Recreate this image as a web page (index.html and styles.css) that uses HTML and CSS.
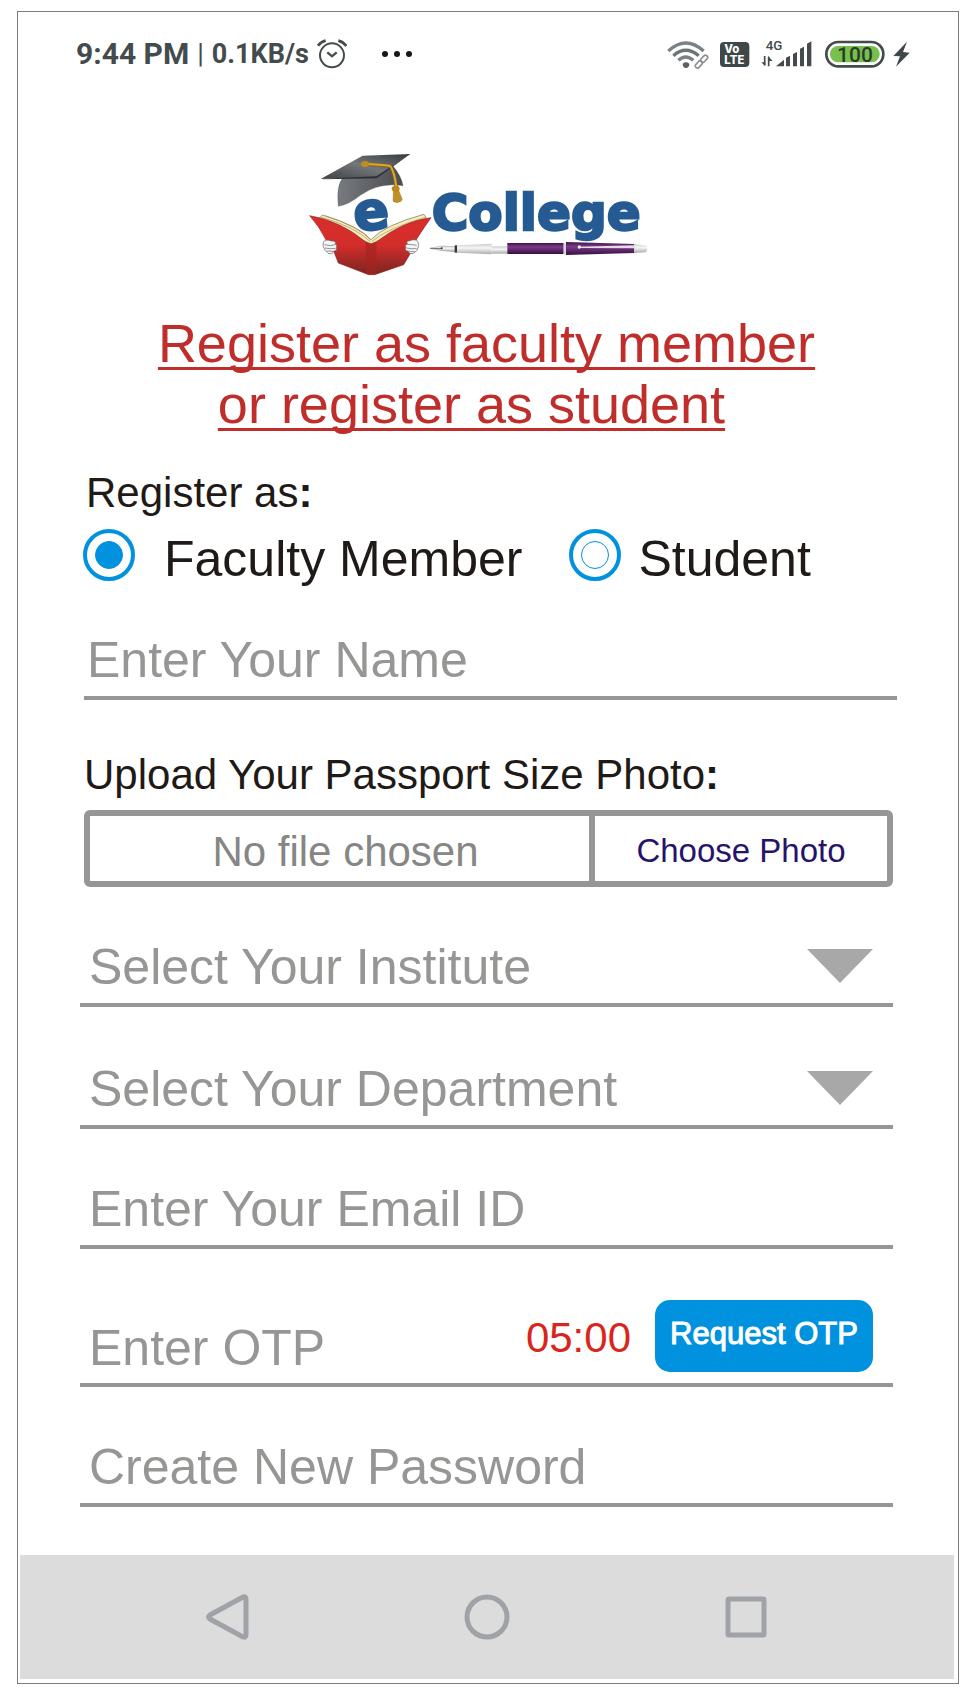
FILE: index.html
```html
<!DOCTYPE html>
<html lang="en">
<head>
<meta charset="utf-8">
<meta name="viewport" content="width=device-width, initial-scale=1">
<title>eCollege – Register</title>
<link rel="stylesheet" href="styles.css">
</head>
<body>
<div class="phone">
  <header class="status">
    <span class="status-time">9:44 PM</span>
    <span class="status-divider">|</span>
    <span class="status-speed">0.1KB/s</span>
    <svg class="status-alarm" width="30" height="30" viewBox="0 0 90 90" fill="none" stroke="#434b4d" stroke-width="6" aria-hidden="true">
      <circle cx="45" cy="49" r="36"/>
      <path d="M31 40 L45 52 L59 40" stroke-width="7"/>
      <path d="M3 20 Q12 8 26 5 M64 5 Q78 8 88 21" stroke-width="8"/>
    </svg>
    <svg class="status-dots" width="30" height="6" viewBox="0 0 30 6" fill="#15181a" aria-hidden="true">
      <circle cx="3" cy="3" r="3"/><circle cx="15" cy="3" r="3"/><circle cx="27" cy="3" r="3"/>
    </svg>
    <svg class="status-icons" width="244" height="30" viewBox="81 114 732 90" aria-hidden="true">
      <g fill="none" stroke="#7b8285" stroke-width="10">
        <path d="M85 150 Q137 102 191 150"/>
        <path d="M100 164 Q137 132 176 164" stroke="#6c7477"/>
        <path d="M115 178 Q137 158 160 178"/>
      </g>
      <path d="M128 188 Q138 180 148 188 Q148 200 138 201 Q128 200 128 188Z" fill="#596164"/>
      <g fill="none" stroke="#8b9193" stroke-width="5">
        <rect x="-12" y="-6" width="24" height="13" rx="6" transform="translate(176 190) rotate(-48)"/>
        <rect x="-12" y="-6" width="24" height="13" rx="6" transform="translate(192 173) rotate(-48)"/>
      </g>
      <rect x="240" y="123" width="88" height="75" rx="12" fill="#3e4749"/>
      <text x="253" y="155" class="badge-text">Vo</text>
      <text x="253" y="190" class="badge-text">LTE</text>
      <text x="377" y="147" class="net-text">4G</text>
      <path d="M374 165 V193 M386 196 V167" fill="none" stroke="#434b4d" stroke-width="5"/>
      <path d="M364 184 H376 V196Z M384 165 L398 180 H384Z" fill="#434b4d"/>
      <path d="M408 196 L432 176 V196Z M438 170 L450 164 V196 H438Z M459 159 L471 153 V196 H459Z M480 143 L492 137 V196 H480Z M501 128 L514 121 V196 H501Z" fill="#434b4d"/>
      <rect x="559" y="123" width="171" height="73" rx="36" fill="#fff" stroke="#434b4d" stroke-width="8"/>
      <rect x="570" y="135" width="149" height="49" rx="24" fill="#78bf4b"/>
      <text x="645" y="183" class="battery-text" text-anchor="middle">100</text>
      <path d="M801 122 L760 165 L780 166 L768 197 L809 155 L789 153Z" fill="#3e4749"/>
    </svg>
  </header>

  <main class="content">
    <svg class="logo" width="356" height="124" viewBox="27 36 1068 372" role="img" aria-label="eCollege">
      <defs>
        <linearGradient id="board" x1="0" y1="1" x2="1" y2="0"><stop offset="0" stop-color="#3f4245"/><stop offset=".5" stop-color="#74777a"/><stop offset="1" stop-color="#36393c"/></linearGradient>
        <linearGradient id="cap" x1="0" y1="0" x2="1" y2="0"><stop offset="0" stop-color="#777b80"/><stop offset="1" stop-color="#484b50"/></linearGradient>
        <linearGradient id="cover" x1="0" y1="0" x2="0" y2="1"><stop offset="0" stop-color="#d92e2b"/><stop offset=".5" stop-color="#d32d2a"/><stop offset="1" stop-color="#792522"/></linearGradient>
        <linearGradient id="barrel" x1="0" y1="0" x2="0" y2="1"><stop offset="0" stop-color="#3c1247"/><stop offset=".35" stop-color="#7d3b88"/><stop offset="1" stop-color="#35103f"/></linearGradient>
        <linearGradient id="silver" x1="0" y1="0" x2="0" y2="1"><stop offset="0" stop-color="#c9cbcd"/><stop offset=".4" stop-color="#f6f6f6"/><stop offset="1" stop-color="#a8aaad"/></linearGradient>
      </defs>
      <path d="M130 112 Q108 135 115 199 Q146 194 182 165 Q238 126 309 137 Q304 108 279 78 L228 111Z" fill="url(#cap)" stroke="#4b4e50" stroke-width="1"/>
      <path d="M63 116 L188 47 L331 42 L229 111Z" fill="url(#board)"/>
      <path d="M63 116 L229 109 L331 42 L230 115 L70 118Z" fill="#2c2f31"/>
      <path d="M200 73 Q260 77 268 78 Q280 83 289 140" fill="none" stroke="#8c6513" stroke-width="10"/>
      <path d="M200 72 Q260 76 268 77 Q280 82 289 140" fill="none" stroke="#dca52e" stroke-width="6"/>
      <ellipse cx="195" cy="72" rx="12" ry="9" fill="#c18e1e"/>
      <path d="M280 152 L279 184 Q290 192 303 184 L307 178 L296 151Z" fill="#bf9127" stroke="#8b661c" stroke-width="1"/>
      <ellipse cx="287" cy="146" rx="12" ry="9" fill="#ba881d"/>
      <path d="M55 238 L67 225 Q180 259 213 299 Q253 255 372 223 L380 236 L213 312Z" fill="#f5eebc" stroke="#7c6840" stroke-width="2"/>
      <path d="M64 232 Q165 260 211 305 M76 227 Q178 261 212 300 M215 305 Q257 267 376 232" fill="none" stroke="#aa8960" stroke-width="2"/>
      <path d="M29 227 Q123 243 197 306 L213 312 L229 306 Q310 243 393 233 Q353 290 345 306 L330 342 L311 374 L224 404 H206 L115 369 L103 338 L77 298 Q57 258 29 227Z" fill="url(#cover)" stroke="#972421" stroke-width="2"/>
      <path d="M197 306 L213 312 L229 306 V402 H198Z" fill="#a62320" fill-opacity=".65"/>
      <g fill="#f5f5f5" stroke="#5e6164" stroke-width="2">
        <path d="M70 307 Q73 296 95 303 Q109 302 106 312 Q113 316 109 324 Q113 332 101 334 Q97 344 84 340 Q74 333 69 318Z"/>
        <path d="M73 314 Q92 320 106 314 M75 324 Q93 328 107 325 M80 333 L100 334" fill="none"/>
        <path d="M354 305 Q347 295 329 302 Q317 303 322 312 Q313 317 317 324 Q312 331 324 334 Q329 344 342 339 Q354 333 356 317Z"/>
        <path d="M350 316 Q333 313 321 313 M350 326 Q332 327 319 324 M344 335 L323 333" fill="none"/>
      </g>
      <text x="160" y="268" class="logo-e" transform="rotate(-5 216 224)">e</text>
      <text x="395" y="269" class="logo-word">College</text>
      <path d="M390 325 L424 318 L466 320 V335 L425 332Z" fill="url(#silver)" stroke="#777b7d" stroke-width="1"/>
      <path d="M391 325 L425 326" stroke="#33383a" stroke-width="2"/><circle cx="425" cy="325" r="3" fill="#33383a"/>
      <rect x="464" y="316" width="8" height="22" fill="#34383b"/>
      <path d="M471 316 L575 311 V343 L471 338Z" fill="url(#silver)"/>
      <path d="M575 319 H622 V341 H575Z" fill="url(#silver)"/>
      <rect x="622" y="309" width="169" height="33" fill="url(#barrel)"/>
      <rect x="791" y="310" width="7" height="33" fill="#d7d7da"/>
      <path d="M798 306 L1003 312 V339 L798 345Z" fill="url(#barrel)"/>
      <path d="M1003 312 L1038 317 Q1046 326 1038 337 L1003 339Z" fill="url(#silver)"/>
      <path d="M836 320 L1003 316 V325 L836 324Z" fill="#e4dce6"/>
      <circle cx="838" cy="321" r="5" fill="#ececef"/>
    </svg>

    <h1 class="title"><span>Register as faculty member</span><br><span class="title-second">or register as student</span></h1>

    <form class="form">
      <fieldset class="roles">
        <legend class="caption">Register as<b>:</b></legend>
        <div class="roles-row">
          <label class="role role-wide"><input class="radio" type="radio" name="role" checked><span>Faculty Member</span></label>
          <label class="role"><input class="radio" type="radio" name="role"><span>Student</span></label>
        </div>
      </fieldset>

      <input class="field field-name" type="text" placeholder="Enter Your Name" aria-label="Enter Your Name">

      <div class="upload">
        <label class="caption" for="photo-button">Upload Your Passport Size Photo<b>:</b></label>
        <div class="file">
          <span class="file-name">No file chosen</span>
          <button class="file-button" id="photo-button" type="button">Choose Photo</button>
        </div>
      </div>

      <div class="select">
        <select class="field" aria-label="Select Your Institute"><option>Select Your Institute</option></select>
        <svg class="select-arrow" width="66" height="34" viewBox="0 0 66 34" aria-hidden="true"><path d="M0 0H66L33 34Z" fill="#a8a8a8"/></svg>
      </div>
      <div class="select">
        <select class="field" aria-label="Select Your Department"><option>Select Your Department</option></select>
        <svg class="select-arrow" width="66" height="34" viewBox="0 0 66 34" aria-hidden="true"><path d="M0 0H66L33 34Z" fill="#a8a8a8"/></svg>
      </div>
      <input class="field" type="email" placeholder="Enter Your Email ID" aria-label="Enter Your Email ID">
      <div class="otp">
        <input class="otp-input" type="text" placeholder="Enter OTP" aria-label="Enter OTP">
        <span class="otp-timer">05:00</span>
        <button class="otp-button" type="button">Request OTP</button>
      </div>
      <input class="field" type="password" placeholder="Create New Password" aria-label="Create New Password">
    </form>
  </main>

  <nav class="nav" aria-label="System">
    <button class="nav-button" type="button" aria-label="Back"><svg width="48" height="48" viewBox="0 0 48 48"><path d="M39 4 L6 22 Q3 24 6 26 L39 44 Q42 45 42 42 V6 Q42 3 39 4Z"/></svg></button>
    <button class="nav-button" type="button" aria-label="Home"><svg width="48" height="48" viewBox="0 0 48 48"><circle cx="24" cy="24" r="20"/></svg></button>
    <button class="nav-button" type="button" aria-label="Recent apps"><svg width="48" height="48" viewBox="0 0 48 48"><rect x="6" y="6" width="36" height="36" rx="1"/></svg></button>
  </nav>
</div>
</body>
</html>
```

FILE: styles.css
```css
* {
  box-sizing: border-box;
}

body {
  margin: 0;
  padding: 11px 13px 13px 17px;
  background: #fff;
  font-family: "Liberation Sans", Arial, sans-serif;
  color: #1f1a17;
}

button,
input,
select {
  font-family: inherit;
}

.phone {
  border: 1px solid #7d7d7d;
  padding: 0 4px 4px 2px;
}

/* Status bar */
.status {
  display: flex;
  align-items: center;
  padding: 24px 43px 0 56px;
  line-height: 36px;
  font-family: Roboto, sans-serif;
  font-weight: 700;
  color: #434b4d;
}

.status-time {
  font-size: 30px;
}

.status-divider {
  margin: 0 8px;
  font-size: 27px;
  font-weight: 400;
}

.status-speed {
  font-size: 27px;
}

.status-alarm {
  margin-left: 8px;
}

.status-dots {
  margin-left: 35px;
}

.status-icons {
  margin-left: auto;
}

.badge-text {
  font-family: Inter, sans-serif;
  font-size: 34px;
  font-weight: 800;
  fill: #fff;
}

.net-text {
  font-size: 40px;
  font-weight: 500;
  fill: #434b4d;
}

.battery-text {
  font-size: 63px;
  font-weight: 500;
  fill: #293c2b;
}

/* Logo and heading */
.content {
  padding: 80px 61px 48px 60px;
}

.logo {
  display: block;
  margin: 0 auto;
}

.logo-e,
.logo-word {
  font-family: "DejaVu Sans", sans-serif;
  font-weight: 700;
  fill: #255b92;
  stroke: #255b92;
  stroke-width: 7;
}

.logo-e {
  font-size: 158px;
}

.logo-word {
  font-size: 150px;
}

.title {
  margin: 37px 0 34px;
  font-size: 54px;
  font-weight: 400;
  line-height: 61px;
  text-align: center;
  color: #bf2e2b;
  text-decoration: underline;
  text-decoration-thickness: 3px;
  text-decoration-skip-ink: none;
  text-underline-offset: 5px;
}

.title-second {
  margin-right: 30px;
}

/* Form */
.form {
  display: flex;
  flex-direction: column;
  gap: 51px;
}

.caption {
  display: block;
  padding: 0;
  font-size: 42px;
  line-height: 48px;
}

.roles {
  min-width: 0;
  margin: 0 0 -1px;
  padding: 0 0 0 6px;
  border: 0;
}

.roles-row {
  display: flex;
  gap: 47px;
  height: 52px;
  margin: 12px 0 0 -3px;
}

.role {
  display: flex;
  gap: 17px;
  font-size: 50px;
  line-height: 60px;
  white-space: nowrap;
}

.role-wide {
  gap: 29px;
}

.radio {
  appearance: none;
  flex: none;
  display: grid;
  place-items: center;
  width: 52px;
  height: 52px;
  margin: 0;
  border: 4px solid #0092df;
  border-radius: 50%;
}

.radio::before {
  content: "";
  width: 26px;
  height: 26px;
  border: 1px solid #0092df;
  border-radius: 50%;
}

.radio:checked::before {
  background: #0092df;
}

.field {
  appearance: none;
  display: block;
  width: 100%;
  height: 69px;
  padding: 0 9px 7px;
  border: 0;
  border-bottom: 4px solid #969694;
  border-radius: 0;
  background: none;
  font-size: 50px;
  line-height: 58px;
  color: #969694;
}

.field::placeholder,
.otp-input::placeholder {
  color: #969694;
  opacity: 1;
}

.field-name {
  margin-left: 4px;
  padding-left: 3px;
}

.upload {
  padding-left: 4px;
}

.file {
  display: grid;
  grid-template-columns: 1fr 298px;
  min-height: 77px;
  margin: 11px 0 0;
  border: 6px solid #969694;
  border-radius: 6px;
}

.file-name {
  align-self: center;
  padding: 6px 0 0 12px;
  font-size: 42px;
  line-height: 48px;
  text-align: center;
  color: #868685;
}

.file-button {
  padding: 4px 0 0;
  border: 0;
  border-left: 6px solid #969694;
  background: none;
  font-size: 33px;
  color: #26136b;
}

.select {
  position: relative;
}

.select + .select {
  margin-top: 2px;
}

.select-arrow {
  position: absolute;
  top: 11px;
  right: 20px;
  pointer-events: none;
}

.otp {
  display: flex;
  align-items: flex-start;
  padding: 0 20px 8px 9px;
  border-bottom: 4px solid #969694;
}

.otp-input {
  flex: 1;
  min-width: 0;
  height: 58px;
  margin-top: 17px;
  padding: 4px 0 0;
  border: 0;
  background: none;
  font-size: 50px;
  line-height: 58px;
}

.otp-timer {
  margin: 14px 24px 0;
  font-size: 42px;
  line-height: 48px;
  color: #da251d;
}

.otp-button {
  width: 218px;
  height: 72px;
  padding: 0 0 4px;
  border: 0;
  border-radius: 15px;
  background: #0092df;
  font-size: 31px;
  color: #fff;
  -webkit-text-stroke: 1px #fff;
}

/* System navigation */
.nav {
  display: grid;
  grid-template-columns: repeat(3, 1fr);
  justify-items: center;
  padding: 38px 78px;
  background: #dcdcdc;
}

.nav-button {
  display: flex;
  padding: 0;
  border: 0;
  background: none;
}

.nav-button svg {
  fill: none;
  stroke: #9fa2a6;
  stroke-width: 5;
}
```
